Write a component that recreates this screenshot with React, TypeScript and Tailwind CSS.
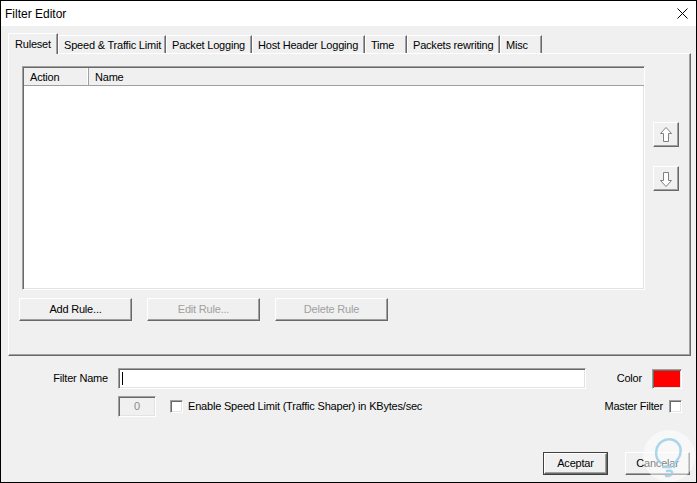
import React from "react";

const raised =
  "border-t border-l border-b border-r border-t-white border-l-white border-b-[#696969] border-r-[#696969] shadow-[inset_-1px_-1px_0_#a0a0a0]";
const sunken =
  "border-t border-l border-b border-r border-t-[#a0a0a0] border-l-[#a0a0a0] border-b-white border-r-white shadow-[inset_1px_1px_0_#696969,inset_-1px_-1px_0_#e3e3e3]";

function Tab({ label, w, active }: { label: string; w: number; active?: boolean }) {
  if (active) {
    return (
      <div
        style={{ width: w }}
        className="relative z-10 -mb-px h-[21px] whitespace-nowrap border-l border-t border-r border-l-white border-t-white border-r-[#696969] bg-[#f0f0f0] pl-[6px] pt-[2px] shadow-[inset_-1px_0_0_#a0a0a0]"
      >
        {label}
      </div>
    );
  }
  return (
    <div
      style={{ width: w }}
      className="h-[18px] whitespace-nowrap border-l border-t border-r border-l-white border-t-white border-r-[#696969] bg-[#f0f0f0] pl-[5px] pt-[1px] shadow-[inset_-1px_0_0_#a0a0a0]"
    >
      {label}
    </div>
  );
}

function Btn({
  label,
  w,
  disabled,
  primary,
}: {
  label: string;
  w: string;
  disabled?: boolean;
  primary?: boolean;
}) {
  if (primary) {
    return (
      <div className={`${w} h-[23px] border border-[#404040]`}>
        <div className={`h-full w-full ${raised} flex items-center justify-center bg-[#f0f0f0] text-black`}>
          {label}
        </div>
      </div>
    );
  }
  return (
    <div
      className={`${w} h-[23px] ${raised} flex items-center justify-center bg-[#f0f0f0] ${
        disabled ? "text-[#a0a0a0]" : "text-black"
      }`}
    >
      {label}
    </div>
  );
}

function Arrow({ up }: { up?: boolean }) {
  return (
    <div className={`flex h-[25px] w-[26px] items-center justify-center bg-[#f0f0f0] ${raised}`}>
      <svg width="12" height="16" viewBox="0 0 12 16" className={up ? "" : "rotate-180"}>
        <path
          d="M6 0.5 L11.5 6.5 L8.5 6.5 L8.5 14.5 L3.5 14.5 L3.5 6.5 L0.5 6.5 Z"
          fill="white"
          stroke="#808080"
          strokeWidth="1"
        />
      </svg>
    </div>
  );
}

function CheckBox() {
  return <div className={`h-[13px] w-[13px] bg-white ${sunken}`} />;
}

export default function App() {
  return (
    <div className="relative flex h-[483px] w-[697px] flex-col overflow-hidden border border-black font-['Liberation_Sans',Arial,sans-serif] text-[11px] tracking-[-0.2px] text-black">
      {/* barra de título */}
      <div className="flex h-[25px] shrink-0 items-center justify-between bg-white pl-[4px] pr-[8px] tracking-normal">
        <span className="text-[12px]">Filter Editor</span>
        <svg width="11" height="11" viewBox="0 0 11 11">
          <path d="M0.5 0.5 L10.5 10.5 M10.5 0.5 L0.5 10.5" stroke="#000" strokeWidth="1" />
        </svg>
      </div>

      <div className="flex-1 bg-[#f0f0f0] pl-[7px] pt-[7px]">
        {/* pestañas */}
        <div className="flex h-[20px] items-end">
          <Tab label="Ruleset" w={50} active />
          <Tab label="Speed & Traffic Limit" w={108} />
          <Tab label="Packet Logging" w={86} />
          <Tab label="Host Header Logging" w={113} />
          <Tab label="Time" w={42} />
          <Tab label="Packets rewriting" w={93} />
          <Tab label="Misc" w={42} />
        </div>

        {/* panel */}
        <div className="h-[303px] w-[683px] border-l border-t border-r border-b border-l-white border-t-white border-r-[#696969] border-b-[#696969] pl-[10px] pt-[12px] shadow-[inset_-1px_-1px_0_#a0a0a0]">
          <div className="flex">
            <div className={`ml-[3px] flex h-[224px] w-[623px] flex-col bg-white ${sunken}`}>
              <div className="ml-[1px] mt-[1px] flex h-[18px] border-b border-[#a0a0a0] bg-[#f0f0f0]">
                <div className="w-[65px] border-r border-[#a0a0a0] pl-[6px] pt-[1px] shadow-[inset_-1px_0_0_white]">Action</div>
                <div className="flex-1 pl-[6px] pt-[1px]">Name</div>
              </div>
            </div>
            <div className="ml-[8px] flex flex-col pt-[56px]">
              <Arrow up />
              <div className="h-[19px]" />
              <Arrow />
            </div>
          </div>

          <div className="mt-[8px] flex gap-[15px]">
            <Btn label="Add Rule..." w="w-[113px]" />
            <Btn label="Edit Rule..." w="w-[113px]" disabled />
            <Btn label="Delete Rule" w="w-[113px]" disabled />
          </div>
        </div>

        {/* nombre del filtro */}
        <div className="mt-[12px] flex h-[21px] w-[674px] items-center">
          <div className="w-[100px] pb-[1px] text-right">Filter Name</div>
          <div className={`ml-[10px] flex h-[21px] w-[468px] items-center bg-white pl-[3px] ${sunken}`}>
            <div className="h-[13px] w-px bg-black" />
          </div>
          <div className="ml-auto pb-[1px]">Color</div>
          <div className={`ml-[10px] h-[20px] w-[30px] bg-[#ff0000] ${sunken}`} />
        </div>

        <div className="mt-[7px] flex h-[21px] w-[674px] items-center">
          <div className={`ml-[110px] flex h-[21px] w-[38px] items-center justify-center bg-[#f0f0f0] text-[#8a8a8a] ${sunken}`}>
            0
          </div>
          <div className="ml-[14px]">
            <CheckBox />
          </div>
          <div className="ml-[5px]">Enable Speed Limit (Traffic Shaper) in KBytes/sec</div>
          <div className="ml-auto">Master Filter</div>
          <div className="ml-[6px]">
            <CheckBox />
          </div>
        </div>

        <div className="mt-[35px] flex w-[682px] justify-end gap-[17px]">
          <Btn label="Aceptar" w="w-[65px]" primary />
          <Btn label="Cancelar" w="w-[65px]" />
        </div>
      </div>

      {/* marca de agua */}
      <svg className="absolute left-[640px] top-[426px]" width="56" height="56" viewBox="0 0 56 56">
        <circle cx="28" cy="29" r="26" fill="white" fillOpacity="0.5" />
        <path
          d="M20 36 C13 31 13 17 24 13 C34 10 42 18 39 28 C38 32 35 34 33 37 L33 40 M22 40 L30 40 M26 44 C34 42 32 50 25 49"
          fill="none"
          stroke="#9fcfe6"
          strokeWidth="2.5"
          strokeLinecap="round"
          strokeOpacity="0.85"
        />
      </svg>
    </div>
  );
}
